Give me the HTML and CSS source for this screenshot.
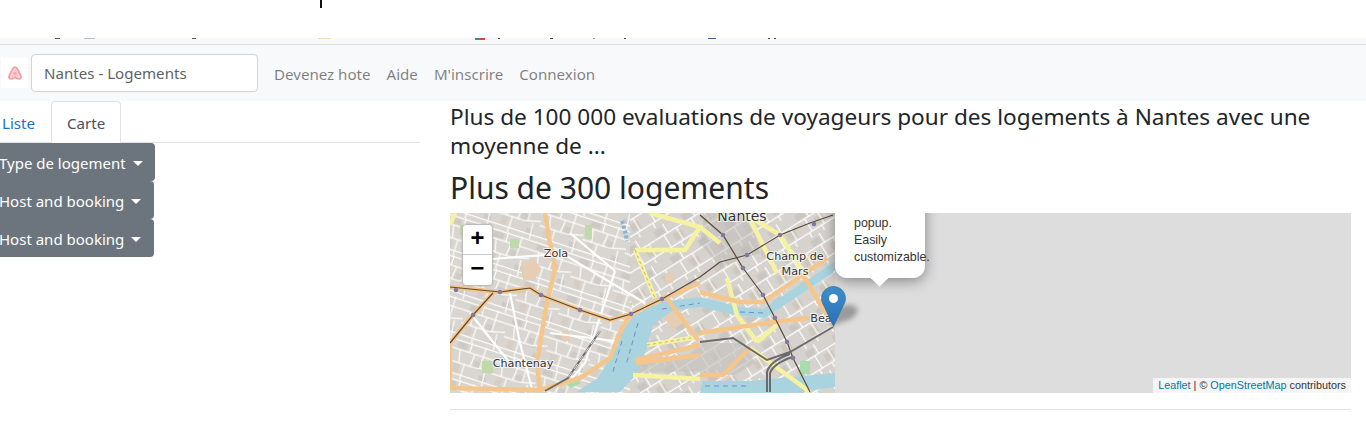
FILE: index.html
```html
<!DOCTYPE html>
<html lang="fr">
<head>
<meta charset="utf-8">
<title>Nantes - Logements</title>
<link rel="stylesheet" href="styles.css">
</head>
<body>
<div class="chrome"><span class="cursor"></span></div>
<div class="clipped">
  <svg class="clipped-svg" width="1366" height="6" viewBox="0 0 1366 6">
    <rect x="55" y="0" width="5" height="1" fill="#555"/><rect x="84" y="0" width="11" height="1" fill="#a9c2d4"/><rect x="192" y="0" width="4" height="1" fill="#555"/><rect x="318" y="0" width="12" height="1" fill="#f3d9b0"/>
    <rect x="475" y="0" width="5" height="2" fill="#2a9d6f"/><rect x="480" y="0" width="5" height="2" fill="#d8405a"/><rect x="498" y="0" width="2" height="1" fill="#444"/><rect x="550" y="0" width="3" height="1" fill="#444"/><rect x="593" y="0" width="2" height="1" fill="#7d9aa5"/><rect x="624" y="0" width="2" height="1" fill="#444"/><rect x="708" y="0" width="8" height="1" fill="#3d6a9e"/><rect x="768" y="0" width="2" height="1" fill="#444"/><rect x="774" y="0" width="2" height="1" fill="#444"/>
  </svg>
</div>
<nav class="navbar">
  <span class="logo-box">
    <svg class="logo" width="16" height="16" viewBox="0 0 16 16"><path d="M8 2C6.900 2 6.200 2.800 5.600 3.900L2.300 10.300C1.300 12.300 2.400 14 4.200 14C5.600 14 6.900 13.400 8 12.400C9.100 13.400 10.400 14 11.800 14C13.600 14 14.700 12.300 13.700 10.300L10.400 3.900C9.800 2.800 9.100 2 8 2Z" fill="#fbd0d2" stroke="#f59ca2" stroke-width="1.700"/><circle cx="8" cy="8.500" r="2" fill="#f7adb2"/></svg>
  </span>
  <input class="search" type="text" value="Nantes - Logements" aria-label="Recherche">
  <ul class="nav-links">
    <li><a href="#">Devenez hote</a></li>
    <li><a href="#">Aide</a></li>
    <li><a href="#">M'inscrire</a></li>
    <li><a href="#">Connexion</a></li>
  </ul>
</nav>
<main class="content">
  <aside class="side">
    <ul class="tabs">
      <li><a class="tab" href="#">Liste</a></li>
      <li><a class="tab active" href="#">Carte</a></li>
    </ul>
    <div class="filters">
      <button class="drop wide" type="button">Type de logement<span class="caret"></span></button>
      <button class="drop" type="button">Host and booking<span class="caret"></span></button>
      <button class="drop" type="button">Host and booking<span class="caret"></span></button>
    </div>
  </aside>
  <section class="results">
    <h4 class="lead">Plus de 100 000 evaluations de voyageurs pour des logements à Nantes avec une moyenne de ...</h4>
    <h2 class="count">Plus de 300 logements</h2>
    <div class="map">
      <svg class="tiles" width="385" height="180" viewBox="0 0 385 180">
        <defs>
          <pattern id="mesh" width="62" height="54" patternUnits="userSpaceOnUse" patternTransform="rotate(18) scale(.72)">
            <rect width="62" height="54" fill="#d9d6d1"/>
            <rect x="5" y="4" width="14" height="8" fill="#cdcac6"/><rect x="34" y="22" width="11" height="12" fill="#cfccc8"/><rect x="8" y="34" width="9" height="12" fill="#d6cec4"/><rect x="46" y="40" width="10" height="7" fill="#cdcac6"/>
            <path d="M0 14H62M0 32H40M22 32V54M24 0V14M44 0V32M0 48H62M40 32L62 26M10 14L14 32M52 32L54 54M32 14L30 32M0 2H62" fill="none" stroke="#fdfdfb" stroke-width="1.700"/>
          </pattern>
          <pattern id="mesh2" width="40" height="38" patternUnits="userSpaceOnUse" patternTransform="rotate(-32) scale(.8)">
            <rect width="40" height="38" fill="#d6d3cf"/>
            <rect x="3" y="3" width="12" height="8" fill="#c9c6c3"/><rect x="22" y="18" width="12" height="10" fill="#cec7bd"/>
            <path d="M0 13H40M0 31H40M18 0V13M12 13V31M30 13V31M26 31V38M8 31V38" fill="none" stroke="#fefefc" stroke-width="1.500"/>
          </pattern>
        </defs>
        <g class="soft">
          <rect width="385" height="180" fill="url(#mesh)"/>
          <path d="M180 0H385V180H180Z" fill="url(#mesh2)"/>
          <path d="M255 0H300L310 40L270 55L250 30Z" fill="#bcb9b6" opacity=".5"/>
          <path d="M185 147L250 140V158L185 160ZM250 130H295L305 150L285 162H250Z" fill="#c6c3bf" opacity=".7"/>
          <path d="M60 26h9v9H60zM72 55h8v6h-8zM32 148h11v12H32zM10 12h5v10h-5zM135 12h7v14h-7zM60 76h16v4H60zM180 90h2v2h-2z" fill="#bfd9aa"/>
          <path d="M350 148h10v13h-10zM112 168l14-5 5 7-10 5z" fill="#a8dcae"/>
          <path d="M72 50l12-4 7 9-6 12-12 1zM212 100l16-6 8 14-14 9zM112 118h8v10h-8zM215 60h8v10h-8zM14 15h7v9h-7zM135 170h10v6h-10z" fill="#e6cdb4"/>
          <path d="M181 106L197 95L218 88L250 84L290 94L313 96L383 50V60L315 105L285 102L250 94L222 98L203 112L197 135L186 162L170 179H126L148 165L168 132L172 118Z" fill="#a9d3de"/>
          <path d="M250 180L252 168H300L385 160V174L345 180Z" fill="#a9d3de"/>
          <path d="M172 128L162 162M188 110L176 152M212 96L250 90M290 99L313 100M255 173H300" fill="none" stroke="#6d8fd8" stroke-width="1" stroke-dasharray="5 4"/>
          <path d="M172 8l3 10 2 10" fill="none" stroke="#86b4d8" stroke-width="4" stroke-dasharray="3 2"/>
          <path d="M42 46L95 42L115 42L195 90M165 58L135 150L118 170M165 58L120 20M60 80L70 130L82 176M20 100L60 150M100 120L165 128" fill="none" stroke="#fff" stroke-width="2.200"/>
          <path d="M185 37L205 85M185 37H235L250 14L200 0M250 14L270 30M297 2L330 22L357 65M277 65L287 102L307 129M307 129L327 112M297 0L327 60M183 162L250 166M197 132L247 124M300 135L360 179M5 0L0 12" fill="none" stroke="#f6f2a0" stroke-width="4.500"/>
          <path d="M197 132L247 124M185 37L205 85" fill="none" stroke="#b8b88c" stroke-width="1" stroke-dasharray="3 3"/>
          <path d="M0 74L50 79L80 75L91 82L130 97L160 107L181 101L212 86L250 70M0 130L23 102L43 80M95 0L100 30L105 55L95 100L87 150L90 177M0 175L90 177L130 165L160 145L172 115L181 101M0 130V175M218 87L248 127M250 79L290 89L313 89L377 45M250 120L323 109L360 105M353 62L383 112M250 162H273L300 135M250 132L185 147M186 150L250 142" fill="none" stroke="#f5c68c" stroke-width="4.500"/>
          <path d="M0 74L50 79L80 75L91 82L130 97L160 107L181 101L212 86L250 64L270 49L297 42L330 22L360 10L383 2M0 130L23 102L43 80M250 2L273 22L293 55L313 82L325 105L337 129L343 145L360 179" fill="none" stroke="#5a4a3a" stroke-width="1.200"/>
          <path d="M250 129L283 125L317 147L340 139L383 114M317 179V159Q320 148 340 141M320 179V160Q323 151 342 144M150 118L118 165L95 178" fill="none" stroke="#6b6b6b" stroke-width="2"/>
          <path d="M150 118L118 165" fill="none" stroke="#fff" stroke-width=".8" stroke-dasharray="6 4"/>
          <g fill="#8377a8"><circle cx="6" cy="77" r="2.300"/><circle cx="50" cy="79" r="2.300"/><circle cx="91" cy="82" r="2.300"/><circle cx="130" cy="97" r="2.300"/><circle cx="181" cy="101" r="2.300"/><circle cx="212" cy="86" r="2.300"/><circle cx="23" cy="102" r="2.300"/><circle cx="273" cy="22" r="2.300"/><circle cx="293" cy="55" r="2.300"/><circle cx="313" cy="82" r="2.300"/><circle cx="325" cy="105" r="2.300"/><circle cx="337" cy="129" r="2.300"/><circle cx="343" cy="145" r="2.300"/><circle cx="297" cy="42" r="2.300"/><circle cx="330" cy="22" r="2.300"/><circle cx="364" cy="11" r="2.300"/></g>
        </g>
        <g class="labels">
          <text x="106" y="44">Zola</text>
          <text x="73" y="154">Chantenay</text>
          <text class="big" x="292" y="8">Nantes</text>
          <text x="345" y="47">Champ de</text>
          <text x="345" y="62">Mars</text>
          <text x="371" y="109">Bea</text>
        </g>
      </svg>
      <div class="zoom">
        <a class="zoom-btn" href="#">+</a>
        <a class="zoom-btn" href="#">−</a>
      </div>
      <svg class="marker-shadow" width="41" height="41" viewBox="0 0 41 41"><path d="M0 40L6 25C10 18 20 17 25 21C28 24 26 29 20 33Z" fill="#000" opacity=".3"/></svg>
      <svg class="marker" width="25" height="41" viewBox="0 0 25 41">
        <defs><linearGradient id="pin" x1="0" y1="0" x2="0" y2="1"><stop offset="0" stop-color="#3f8fc9"/><stop offset="1" stop-color="#2a6fb8"/></linearGradient></defs>
        <path d="M12.500 0.500C5.800 0.500 0.500 5.800 0.500 12.500C0.500 15 1.500 17.500 2.800 19.800L12.500 40.500L22.200 19.800C23.500 17.500 24.500 15 24.500 12.500C24.500 5.800 19.200 0.500 12.500 0.500Z" fill="url(#pin)" stroke="#2e6c97" stroke-width=".6"/>
        <circle cx="12.500" cy="12.500" r="4.500" fill="#fff"/>
      </svg>
      <div class="popup">
        <p class="popup-text">popup.<br>Easily<br>customizable.</p>
        <span class="popup-tip"></span>
      </div>
      <div class="attribution"><a href="#">Leaflet</a> | © <a href="#">OpenStreetMap</a> contributors</div>
    </div>
    <hr class="rule">
  </section>
</main>
</body>
</html>
```

FILE: styles.css
```css
* { box-sizing: border-box; }
html, body { margin: 0; padding: 0; height: 427px; overflow: hidden; background: #fff; }
body { font-family: "Noto Sans", "Open Sans", sans-serif; font-size: 15.1px; color: #212529; }

.chrome { height: 38px; background: #fff; padding-left: 320px; }
.cursor { display: block; width: 2px; height: 8px; background: #111; }
.clipped { height: 7px; background: #f8f8f9; border-bottom: 1px solid #dcdde0; }
.clipped-svg { display: block; }

.navbar { display: flex; align-items: center; height: 56px; background: #f8f9fa; padding-left: 1px; }
.logo-box { flex: none; display: flex; align-items: center; justify-content: center; width: 27px; height: 30px; margin-right: 3px; background: #fff; }
.search { width: 227px; height: 38px; padding: 0 12px; font: inherit; color: #5c6368; background: #fff; border: 1px solid #ced4da; border-radius: 4px; }
.nav-links { display: flex; list-style: none; margin: 2px 0 0 8px; padding: 0; }
.nav-links a { display: block; padding: 8px; color: rgba(0,0,0,.5); text-decoration: none; white-space: nowrap; }

.content { display: flex; }
.side { flex: none; width: 435px; margin-left: -15px; margin-right: 30px; }
.tabs { display: flex; list-style: none; margin: 0; padding: 0; height: 42px; border-bottom: 1px solid #dee2e6; }
.tab { display: block; height: 42px; padding: 8px 15px 8px 16px; line-height: 26px; color: #1b6fd0; text-decoration: none; border: 1px solid transparent; border-radius: 4px 4px 0 0; }
.tab.active { color: #495057; background: #fff; border-color: #dee2e6 #dee2e6 #fff; padding: 8px 15px; }
.filters { display: flex; flex-direction: column; align-items: flex-start; }
.drop { display: flex; align-items: center; height: 38px; width: 169px; padding: 2px 0 0 14px; font-family: inherit; font-size: 15px; color: #fff; background: #6c757d; border: 0; border-radius: 4px; white-space: nowrap; }
.drop.wide { width: 170px; }
.caret { margin-left: 7px; border-top: 5px solid #fff; border-left: 5px solid transparent; border-right: 5px solid transparent; }

.results { flex: none; width: 901px; }
.lead { margin: 1px 0 9px; font-size: 22.600px; font-weight: 400; line-height: 29px; }
.count { margin: 0 0 6px; font-size: 30px; font-weight: 400; line-height: 38px; }

.map { position: relative; height: 180px; overflow: hidden; background: #ddd; }
.tiles { display: block; }
.soft { filter: blur(.4px); }
.labels text { font-family: "DejaVu Sans", sans-serif; font-size: 11.200px; fill: #333; text-anchor: middle; paint-order: stroke; stroke: rgba(255,255,255,.75); stroke-width: 2px; }
.labels .big { font-size: 14px; }

.zoom { position: absolute; left: 12px; top: 11px; width: 31px; background: #fff; border: 1px solid #bbb; border-radius: 4px; box-shadow: 0 0 0 1px rgba(0,0,0,.06); }
.zoom-btn { display: block; height: 30px; font: bold 24px/29px "Liberation Mono", monospace; text-align: center; color: #000; text-decoration: none; }
.zoom-btn:first-child { border-bottom: 1px solid #ccc; }

.marker { position: absolute; left: 371px; top: 73px; }
.marker-shadow { position: absolute; left: 381px; top: 73px; filter: blur(2.500px); }

.popup { position: absolute; left: 385px; bottom: 115px; width: 90px; height: 100px; padding-left: 19px; display: flex; flex-direction: column; justify-content: flex-end; background: #fff; border-radius: 12px; box-shadow: 0 3px 14px rgba(0,0,0,.4); }
.popup-text { margin: 0 0 12px; font: 12.400px/17px "Liberation Sans", Arial, sans-serif; color: #333; white-space: nowrap; }
.popup-tip { position: absolute; left: 36px; bottom: -11px; width: 17px; height: 11px; overflow: hidden; }
.popup-tip::after { content: ""; position: absolute; left: 2px; top: -7px; width: 13px; height: 13px; background: #fff; transform: rotate(45deg); }

.attribution { position: absolute; right: 0; bottom: 0; height: 15px; padding: 0 5px; font: 10.800px/15px "Liberation Sans", Arial, sans-serif; color: #333; background: rgba(255,255,255,.7); white-space: nowrap; }
.attribution a { color: #0078a8; text-decoration: none; }

.rule { margin: 16px 0 0; border: 0; border-top: 1px solid #e3e3e3; }
```
